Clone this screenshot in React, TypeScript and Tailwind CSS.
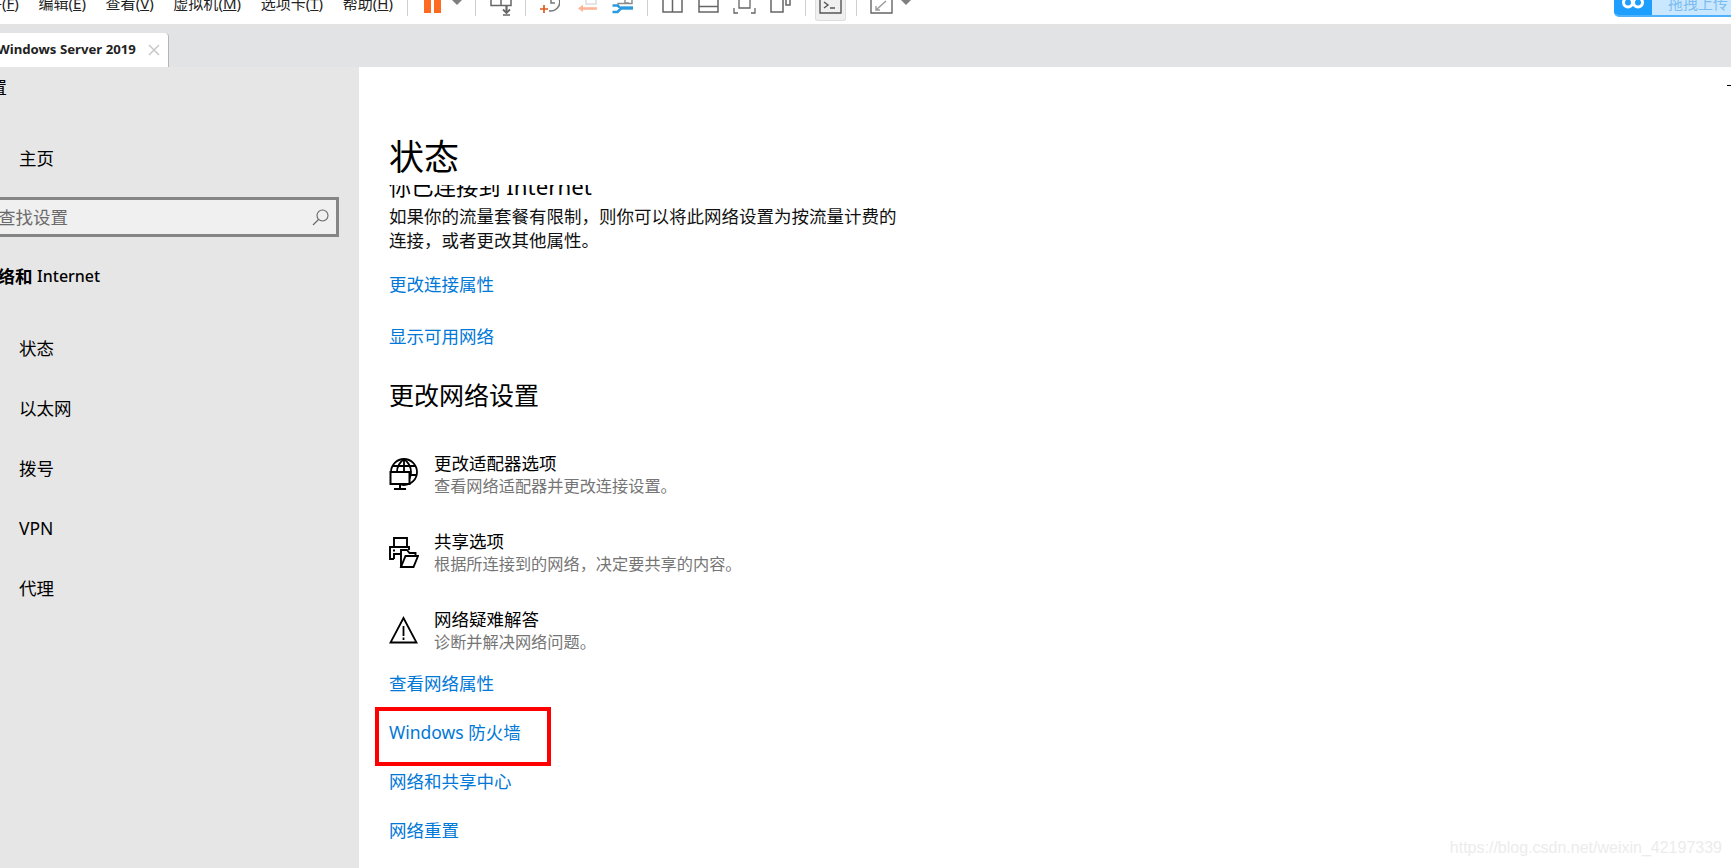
import React from 'react';

const font = { fontFamily: '"Noto Sans", "Noto Sans CJK SC", sans-serif' };

const Sep = ({ className }: { className: string }) => (
  <div className={`w-px h-[16px] shrink-0 bg-[#cfcfcf] ${className}`} />
);

const Caret = ({ className }: { className: string }) => (
  <svg className={`shrink-0 ${className}`} width="10" height="5" viewBox="0 0 10 5">
    <path d="M0 0h10L5 5z" fill="#7f7f7f" />
  </svg>
);

const MenuItem = ({ label, hot }: { label: string; hot: string }) => (
  <span className="shrink-0 whitespace-nowrap leading-[20px]">
    {label}(<span className="underline">{hot}</span>)
  </span>
);

const SideItem = ({ label, className = '' }: { label: string; className?: string }) => (
  <div className={`h-[60px] flex items-center pl-[19px] ${className}`}>{label}</div>
);

const Link = ({ label, className = '' }: { label: string; className?: string }) => (
  <div className={`h-[40px] flex items-center text-[#0078d7] ${className}`}>{label}</div>
);

const OptionRow = ({
  icon,
  title,
  sub,
  className = '',
}: {
  icon: React.ReactNode;
  title: string;
  sub: string;
  className?: string;
}) => (
  <div className={`flex ${className}`}>
    <div className="w-[45px] shrink-0 flex items-center">{icon}</div>
    <div className="flex flex-col">
      <div className="h-[24px] flex items-center text-black">{title}</div>
      <div className="h-[22px] flex items-center text-[16.2px] text-[#757575]">{sub}</div>
    </div>
  </div>
);

const Toolbar = () => (
  <div className="h-[26px] shrink-0 bg-white border-b-2 border-[#e3e3e3] flex items-start overflow-hidden">
    <div className="w-[421px] shrink-0 flex justify-between -ml-[28px] -mt-[7px] text-[15px] text-[#222]">
      <MenuItem label="文件" hot="F" />
      <MenuItem label="编辑" hot="E" />
      <MenuItem label="查看" hot="V" />
      <MenuItem label="虚拟机" hot="M" />
      <MenuItem label="选项卡" hot="T" />
      <MenuItem label="帮助" hot="H" />
    </div>
    <Sep className="ml-[14px]" />
    <svg className="ml-[16px] shrink-0" width="17" height="13" viewBox="0 0 17 13">
      <path d="M0 0h7v13H0zM10 0h7v13h-7z" fill="#ff6a22" />
    </svg>
    <Caret className="ml-[11px]" />
    <Sep className="ml-[13px]" />
    <svg className="ml-[14px] shrink-0" width="22" height="16" viewBox="0 0 22 16" fill="none" stroke="#666" strokeWidth="1.5">
      <path d="M1 0v5.500h20V0M11 0v5.500" />
      <path d="M16.500 5v7" strokeWidth="2.200" />
      <path d="M13 9.500l3.500 3.500L20 9.500" strokeWidth="1.800" />
      <path d="M13 15h7" />
    </svg>
    <Sep className="ml-[13px]" />
    <svg className="ml-[14px] shrink-0" width="20" height="14" viewBox="0 0 20 14" fill="none">
      <path d="M9 10.800A9 9 0 0 0 19.500 0M11 0v3h4" stroke="#777" strokeWidth="1.5" />
      <path d="M4 5v8M0 9h8" stroke="#e4581c" strokeWidth="1.700" />
    </svg>
    <svg className="ml-[17px] shrink-0" width="20" height="12" viewBox="0 0 20 12" fill="none">
      <path d="M9 0v4h10V0" stroke="#dcdcdc" strokeWidth="1.500" />
      <path d="M20 8.500H4" stroke="#ffb598" strokeWidth="2.600" />
      <path d="M6 4.500L1 8.500l5 3.500z" fill="#ffb598" />
    </svg>
    <svg className="ml-[15px] shrink-0" width="21" height="14" viewBox="0 0 21 14" fill="none">
      <path d="M6 6V3.500h14V0M13 0v3h4" stroke="#8a8a8a" strokeWidth="1.400" />
      <path d="M9 8h12" stroke="#2b9ae0" strokeWidth="3.400" />
      <path d="M0.500 5.500h5l3 2.500v1l-3 3h-5" stroke="#2b9ae0" strokeWidth="2.600" />
    </svg>
    <Sep className="ml-[14px]" />
    <svg className="ml-[14px] shrink-0" width="21" height="13" viewBox="0 0 21 13" fill="none" stroke="#666" strokeWidth="1.5">
      <path d="M1 0v12h19V0M10.500 0v12" />
    </svg>
    <svg className="ml-[15px] shrink-0" width="21" height="13" viewBox="0 0 21 13" fill="none" stroke="#666" strokeWidth="1.5">
      <path d="M1 0v12h19V0M1 6.500h19" />
    </svg>
    <svg className="ml-[14px] shrink-0" width="23" height="14" viewBox="0 0 23 14" fill="none" stroke="#666" strokeWidth="1.3">
      <path d="M6 0v8h11V0" />
      <path d="M1 8v5h4M22 8v5h-4" />
    </svg>
    <svg className="ml-[14px] shrink-0" width="21" height="13" viewBox="0 0 21 13" fill="none" stroke="#666" strokeWidth="1.5">
      <path d="M1 0v12h12V0M16 0v5h4V0" />
    </svg>
    <Sep className="ml-[14px]" />
    <div className="ml-[9px] w-[31px] h-[21px] shrink-0 bg-[#f0f0f0] border border-t-0 border-[#dedede] rounded-b-[3px] flex justify-center">
      <svg width="23" height="14" viewBox="0 0 23 14" fill="none" stroke="#555" strokeWidth="1.4">
        <path d="M1 0v13h21V0" />
        <path d="M5 2l4 3-4 3M11 8h5" />
      </svg>
    </div>
    <Sep className="ml-[10px]" />
    <svg className="ml-[13px] shrink-0" width="23" height="14" viewBox="0 0 23 14" fill="none" stroke="#666" strokeWidth="1.4">
      <path d="M1 0v13h21V0" />
      <path d="M6 10l10-9M6 6v4h4" stroke="#999" />
    </svg>
    <Caret className="ml-[8px]" />
    <div className="ml-auto w-[117px] h-[17px] shrink-0 flex bg-[#c9e8ff] border-b-2 border-[#4db2fb] rounded-bl-[5px] overflow-hidden">
      <div className="w-[38px] h-full shrink-0 bg-[#1e9fff] flex justify-center">
        <svg width="24" height="10" viewBox="0 0 24 10" fill="none" stroke="#fff" strokeWidth="3">
          <circle cx="7" cy="2.500" r="4.500" />
          <circle cx="17" cy="2.500" r="4.500" />
        </svg>
      </div>
      <span className="ml-[16px] -mt-[7px] text-[15px] leading-[20px] whitespace-nowrap text-[#7cbcf0]">拖拽上传</span>
    </div>
  </div>
);

const TabStrip = () => (
  <div className="h-[41px] shrink-0 bg-[#e2e3e5] flex items-end">
    <div className="w-[169px] h-[34px] bg-white border-r border-[#b5b5b5] rounded-tr-[4px] flex items-center overflow-hidden">
      <span className="-ml-[3px] text-[13.2px] font-bold text-[#222] whitespace-nowrap" style={{ fontFamily: '"Noto Sans", sans-serif' }}>
        Windows Server 2019
      </span>
      <svg className="ml-auto mr-[8px] shrink-0" width="12" height="12" viewBox="0 0 12 12" stroke="#c8c8c8" strokeWidth="1.5">
        <path d="M1 1l10 10M11 1L1 11" />
      </svg>
    </div>
  </div>
);

const Sidebar = () => (
  <div className="w-[359px] shrink-0 bg-[#e6e6e6] overflow-hidden text-[17.5px] text-black">
    <div className="h-[40px] flex items-center -ml-[28px]">设置</div>
    <SideItem label="主页" className="mt-[21px]" />
    <div className="mt-[9px] w-[339px] h-[40px] bg-[#f0f0f0] border-[3px] border-l-0 border-[#858585] flex items-center">
      <span className="-ml-[2px] text-[#6b6b6b] whitespace-nowrap">查找设置</span>
      <svg className="ml-auto mr-[7px]" width="17" height="17" viewBox="0 0 17 17" fill="none" stroke="#666" strokeWidth="1.1">
        <circle cx="10.500" cy="6.500" r="5.500" />
        <path d="M6.500 10.500L1 16" />
      </svg>
    </div>
    <div className="mt-[19px] h-[40px] flex items-center -ml-[20px] font-semibold whitespace-nowrap">
      网络和&nbsp;<span className="text-[16px] font-medium">Internet</span>
    </div>
    <SideItem label="状态" className="mt-[22px]" />
    <SideItem label="以太网" />
    <SideItem label="拨号" />
    <SideItem label="VPN" />
    <SideItem label="代理" />
  </div>
);

const Main = () => (
  <div className="flex-1 min-w-0 bg-white pl-[30px] relative flex flex-col text-[17.5px] text-[#111]">
    <div className="absolute right-0 top-[18px] w-[4px] h-px bg-black" />
    <div className="h-[118px] shrink-0 pt-[68px]">
      <h1 className="h-[44px] flex items-center text-[35px] text-black">状态</h1>
    </div>
    <div className="flex-1 min-h-0 overflow-hidden -ml-[14px] pl-[14px]">
      <div className="h-[30px] -mt-[13px] flex items-center text-[22.3px] text-black whitespace-nowrap">你已连接到 Internet</div>
      <div className="mt-[2px] leading-[24px]">
        <div className="h-[24px]">如果你的流量套餐有限制，则你可以将此网络设置为按流量计费的</div>
        <div className="h-[24px]">连接，或者更改其他属性。</div>
      </div>
      <Link label="更改连接属性" className="mt-[12px]" />
      <Link label="显示可用网络" className="mt-[12px]" />
      <h2 className="mt-[20px] h-[40px] flex items-center text-[25px] text-black">更改网络设置</h2>
      <OptionRow
        className="mt-[35px]"
        title="更改适配器选项"
        sub="查看网络适配器并更改连接设置。"
        icon={
          <svg width="29" height="32" viewBox="0 0 29 32" fill="none" stroke="#000" strokeWidth="1.800">
            <circle cx="15" cy="14" r="13" />
            <path d="M3 8h24M15 1v13M8 14c0-6 3-10 7-13 4 3 7 8 7 13 0 5-2 8-4 11M22 17h6" />
            <path d="M1.500 14h19v12h-19z" fill="#fff" strokeWidth="2" />
            <path d="M11 26v5M5 31h12" strokeWidth="2" />
          </svg>
        }
      />
      <OptionRow
        className="mt-[32px]"
        title="共享选项"
        sub="根据所连接到的网络，决定要共享的内容。"
        icon={
          <svg width="30" height="31" viewBox="0 0 30 31" fill="none" stroke="#000" strokeWidth="1.900">
            <path d="M5 10V1h13v9" />
            <path d="M5 22H1V10h19v3" />
            <path d="M5 22v-5h7M4 13.500h2" />
            <path d="M12 30V13h6l2.500 3h6v3" fill="#fff" />
            <path d="M12 30h12.500L29 19H16.500z" fill="#fff" />
          </svg>
        }
      />
      <OptionRow
        className="mt-[32px]"
        title="网络疑难解答"
        sub="诊断并解决网络问题。"
        icon={
          <svg width="29" height="28" viewBox="0 0 29 28" fill="none" stroke="#000" strokeWidth="1.800">
            <path d="M14.500 2L1.500 26.500h26z" />
            <path d="M14.500 10v10M14.500 21.500v2.500" />
          </svg>
        }
      />
      <Link label="查看网络属性" className="mt-[10px]" />
      <div className="relative mt-[9px]">
        <Link label="Windows 防火墙" />
        <div className="absolute -top-[5px] -left-[14px] w-[176px] h-[59px] border-4 border-[#ff0000]" />
      </div>
      <Link label="网络和共享中心" className="mt-[9px]" />
      <Link label="网络重置" className="mt-[9px]" />
    </div>
    <div
      className="absolute right-[9px] bottom-[8px] text-[16px] text-[#ececec] whitespace-nowrap"
      style={{ fontFamily: '"Liberation Sans", sans-serif' }}
    >
      https://blog.csdn.net/weixin_42197339
    </div>
  </div>
);

export default function App() {
  return (
    <div className="w-[1731px] h-[868px] overflow-hidden flex flex-col bg-white" style={font}>
      <Toolbar />
      <TabStrip />
      <div className="flex-1 min-h-0 flex">
        <Sidebar />
        <Main />
      </div>
    </div>
  );
}
